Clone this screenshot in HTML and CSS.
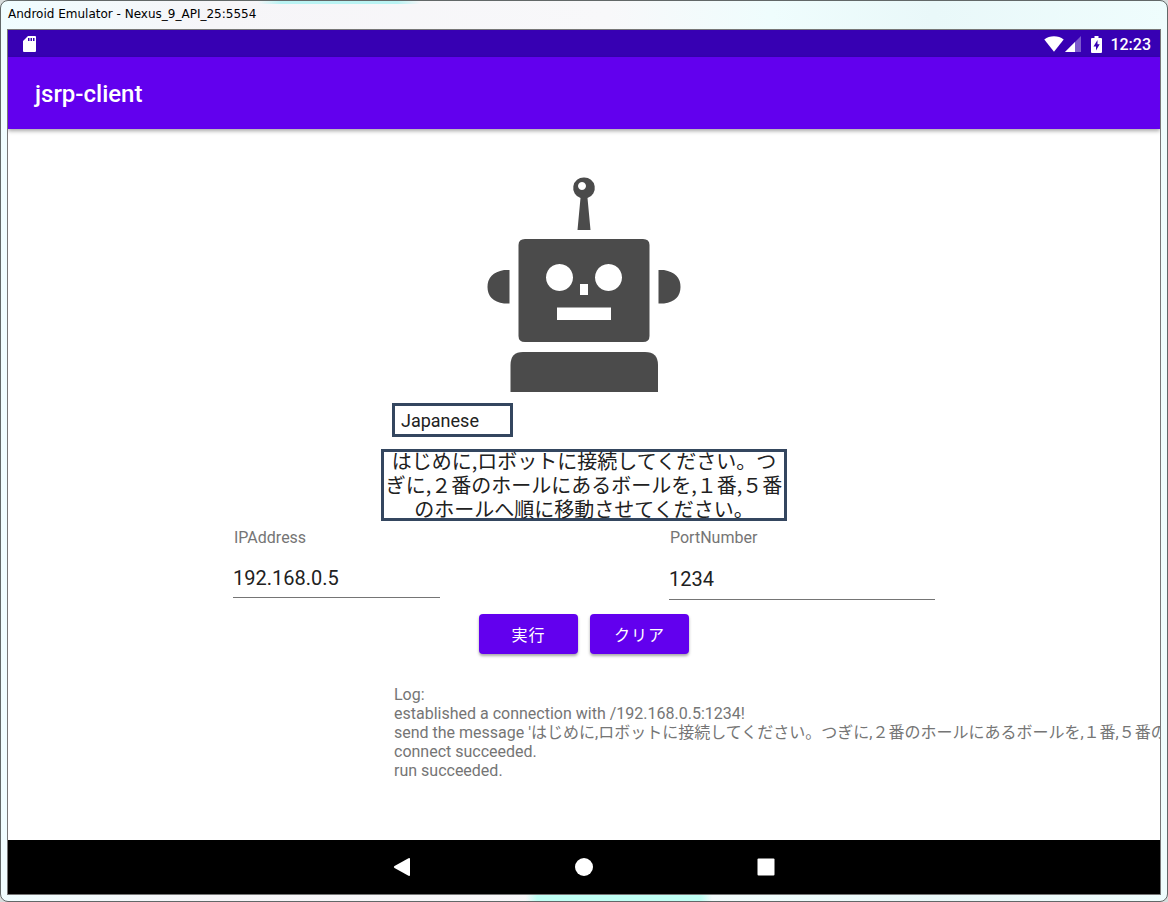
FILE: index.html
```html
<!DOCTYPE html>
<html lang="ja">
<head>
<meta charset="utf-8">
<title>Android Emulator - Nexus_9_API_25:5554</title>
<link rel="stylesheet" href="styles.css">
</head>
<body>
<div class="window">
  <header class="titlebar">Android Emulator - Nexus_9_API_25:5554</header>
  <div class="screen">
    <div class="statusbar">
      <svg class="sdcard" width="14" height="16" viewBox="0 0 14 16" aria-hidden="true"><path fill="#fff" fill-rule="evenodd" d="M5 0H12Q13 0 13 1V15Q13 16 12 16H1Q0 16 0 15V5ZM5 2V5H6.500V2ZM7.500 2V5H9V2ZM10 2V5H11.500V2Z"/></svg>
      <div class="status-icons">
        <svg width="20" height="16" viewBox="0 0 20 16" aria-hidden="true"><path fill="#fff" d="M.3 3.500Q4.500 .3 10 .3T19.700 3.500L10 15.700Z"/></svg>
        <svg width="17" height="16" viewBox="0 0 17 16" aria-hidden="true"><path fill="#fff" fill-opacity=".35" d="M16 0V16H0Z"/><path fill="#fff" d="M10 6V16H0Z"/></svg>
        <svg class="battery" width="11" height="17" viewBox="0 0 11 17" aria-hidden="true"><path fill="#fff" fill-rule="evenodd" d="M3.500 0H7.500V2H10Q11 2 11 3V16Q11 17 10 17H1Q0 17 0 16V3Q0 2 1 2H3.500ZM6.500 4L2.500 10.500H5V14.500L8.700 8.200H6.500Z"/></svg>
        <time class="clock">12:23</time>
      </div>
    </div>
    <div class="appbar"><h1 class="app-title">jsrp-client</h1></div>
    <main class="content">
      <svg class="robot" width="196" height="216" viewBox="0 0 196 216" role="img" aria-label="Robot">
        <g fill="#4b4b4b">
          <path fill-rule="evenodd" d="M98 .5a10.500 10.500 0 0 1 3.500 20.500L104.500 53H91.500L94.500 21A10.500 10.500 0 0 1 98 .5ZM96 5a4 4 0 1 0 .01 0Z"/>
          <path fill-rule="evenodd" d="M39 62H157Q163.500 62 163.500 68V159Q163.500 165 157 165H39Q32.500 165 32.500 159V68Q32.500 62 39 62ZM73.500 87a13.500 13.500 0 1 0 .01 0ZM122.500 87a13.500 13.500 0 1 0 .01 0ZM94 107V118H102V107ZM71 130.500V143H125V130.500Z"/>
          <path d="M23.500 93V126.500H18Q1.500 124 1.500 110T18 93ZM172.500 93V126.500H178Q194.500 124 194.500 110T178 93Z"/>
          <path d="M24.500 215V188Q24.500 175 37 175H159Q172 175 172 188V215Z"/>
        </g>
      </svg>
      <div class="language">
        <select class="language-select" aria-label="Language"><option>Japanese</option><option>English</option></select>
      </div>
      <p class="message">はじめに,ロボットに接続してください。つぎに,２番のホールにあるボールを,１番,５番のホールへ順に移動させてください。</p>
      <form class="form" onsubmit="return false">
        <div class="fields">
          <div class="field">
            <label class="label" for="ip">IPAddress</label>
            <input class="input" id="ip" type="text" value="192.168.0.5">
          </div>
          <div class="field field-wide">
            <label class="label" for="port">PortNumber</label>
            <input class="input" id="port" type="text" value="1234">
          </div>
        </div>
        <div class="actions">
          <button class="button" type="button">実行</button>
          <button class="button" type="button">クリア</button>
        </div>
      </form>
      <div class="log">
        <div class="line">Log:</div>
        <div class="line">established a connection with /192.168.0.5:1234!</div>
        <div class="line">send the message 'はじめに,ロボットに接続してください。つぎに,２番のホールにあるボールを,１番,５番の</div>
        <div class="line">connect succeeded.</div>
        <div class="line">run succeeded.</div>
      </div>
    </main>
    <nav class="navbar">
      <button class="nav-button" type="button" aria-label="Back"><svg width="18" height="18" viewBox="0 0 18 18"><path fill="#fff" d="M15.500 .2Q17 -.3 17 1V17Q17 18.300 15.500 17.800L1.500 10Q.3 9 1.500 8Z"/></svg></button>
      <button class="nav-button" type="button" aria-label="Home"><svg width="18" height="18" viewBox="0 0 18 18"><circle fill="#fff" cx="9" cy="9" r="9"/></svg></button>
      <button class="nav-button" type="button" aria-label="Overview"><svg width="18" height="18" viewBox="0 0 18 18"><rect fill="#fff" x=".5" y=".5" width="17" height="17" rx="1"/></svg></button>
    </nav>
  </div>
</div>
</body>
</html>
```
FILE: styles.css
```css
* { box-sizing: border-box; }

body {
  margin: 0;
  background: #d8dcdc;
  font-family: Roboto, "Noto Sans CJK JP", sans-serif;
  color: #212121;
}

.window {
  display: flex;
  flex-direction: column;
  min-height: 100vh;
  padding: 0 6px 6px;
  border: 1px solid #626868;
  border-radius: 8px;
  background:
    linear-gradient(90deg, transparent 45%, #c0fff4 46%, #c0fff4 60%, transparent 61%) bottom / 100% 6px no-repeat,
    linear-gradient(90deg, transparent 22%, #b9f3f3 24%, #b9f3f3 34%, transparent 36%) top / 100% 3px no-repeat,
    linear-gradient(90deg, #f0fdff, #f6f5f8 18%, #f8f8fa 52%, #effdfd 66%, #e9f8f9 80%, #effdfd);
}

.titlebar {
  height: 28px;
  padding-left: 1px;
  line-height: 27px;
  font-family: "DejaVu Sans", sans-serif;
  font-size: 12px;
  color: #000;
}

.screen {
  display: flex;
  flex: 1;
  flex-direction: column;
  overflow: hidden;
  border: 1px solid #777;
  background: #fff;
}

.statusbar {
  display: flex;
  align-items: center;
  justify-content: space-between;
  height: 27px;
  padding: 1px 9px 0 15px;
  background: #3700b3;
  color: #fff;
}

.status-icons { display: flex; align-items: center; gap: 1px; }
.battery { margin: 0 7px 0 8px; }
.clock { font-size: 16px; font-weight: 500; }

.appbar {
  display: flex;
  align-items: center;
  height: 72px;
  padding: 2px 27px 0;
  background: #6200ee;
  color: #fff;
  box-shadow: 0 2px 4px rgba(0, 0, 0, .35);
}

.app-title { margin: 0; font-size: 24px; font-weight: 500; }

.content {
  display: flex;
  flex: 1;
  flex-direction: column;
  align-items: center;
  padding: 48px 0 32px;
}

.language { width: 384px; margin: 10px 0 12px; }

.language-select {
  display: block;
  appearance: none;
  width: 121px;
  height: 34px;
  padding: 0 6px;
  border: 3px solid #34465f;
  border-radius: 0;
  background: #fff;
  font-family: inherit;
  font-size: 18px;
  color: #212121;
}

.message {
  width: 406px;
  margin: 0;
  padding: 0 3px;
  box-shadow: inset 0 0 0 3px #34465f;
  font-family: "Noto Sans CJK JP", sans-serif;
  font-size: 20px;
  line-height: 24px;
  text-align: center;
}

.form { width: 702px; max-width: 100%; margin-top: 7px; }
.fields { display: flex; justify-content: space-between; height: 72px; }
.field { display: flex; flex-direction: column; width: 207px; }
.field-wide { width: 266px; }
.label { padding-left: 1px; font-size: 16px; line-height: 20px; color: #757575; }

.input {
  width: 100%;
  height: 50px;
  padding: 10px 0 0;
  border: 0;
  border-bottom: 1px solid #757575;
  background: transparent;
  font-family: inherit;
  font-size: 20px;
  color: #212121;
}

.field-wide .input { height: 52px; }

.actions { display: flex; justify-content: center; gap: 12px; margin-top: 14px; }

.button {
  width: 99px;
  height: 40px;
  padding: 0;
  border: 0;
  border-radius: 4px;
  background: #6200ee;
  color: #fff;
  font-family: inherit;
  font-size: 16px;
  letter-spacing: 1px;
  box-shadow: 0 2px 3px rgba(0, 0, 0, .35);
}

.log {
  width: 380px;
  margin-top: 31px;
  font-size: 16px;
  line-height: 19px;
  color: #757575;
  white-space: nowrap;
}

.line { height: 19px; }

.navbar {
  display: flex;
  align-items: center;
  justify-content: center;
  height: 54px;
  background: #000;
}

.nav-button {
  display: flex;
  align-items: center;
  justify-content: center;
  width: 182px;
  height: 100%;
  padding: 0;
  border: 0;
  background: transparent;
}
```
